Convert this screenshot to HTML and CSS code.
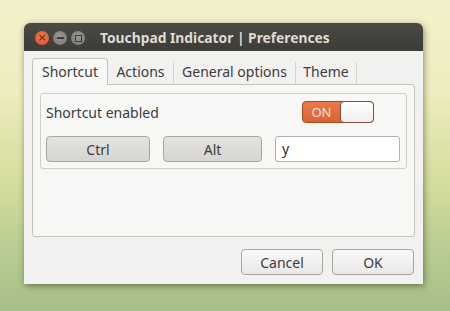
FILE: index.html
```html
<!DOCTYPE html>
<html lang="en">
<head>
  <meta charset="UTF-8" />
  <title>Touchpad Indicator | Preferences</title>
  <link rel="stylesheet" href="styles.css">
</head>
<body>

  <div class="window">
    <div class="titlebar">
      <div class="wm-buttons">
        <span class="wm close">&#215;</span>
        <span class="wm minimize"><i class="dash"></i></span>
        <span class="wm maximize"><i class="box"></i></span>
      </div>
      <div class="title">Touchpad Indicator | Preferences</div>
    </div>

    <div class="content">
      <div class="tabs">
        <div class="tab active">Shortcut</div>
        <div class="tab">Actions</div>
        <div class="tab">General options</div>
        <div class="tab">Theme</div>
      </div>

      <div class="panel">
        <div class="frame">
          <div class="row">
            <span class="label">Shortcut enabled</span>
            <div class="switch">
              <span class="switch-on">ON</span>
              <span class="knob"></span>
            </div>
          </div>
          <div class="row keys">
            <button class="btn key ctrl">Ctrl</button>
            <button class="btn key alt">Alt</button>
            <div class="entry">y</div>
          </div>
        </div>
      </div>

      <div class="actions">
        <button class="btn dialog">Cancel</button>
        <button class="btn dialog">OK</button>
      </div>
    </div>
  </div>

</body>
</html>
```

FILE: styles.css
```css
body {
  margin: 0;
  padding: 0;
  width: 450px;
  height: 311px;
  overflow: hidden;
  font-family: 'Noto Sans', 'DejaVu Sans', sans-serif;
  background: linear-gradient(to bottom, #f3f1cb 0%, #eeedbe 30%, #d3dc9c 60%, #b3c98f 85%, #a6bf86 100%);
}

.window {
  margin: 23px 0 0 24px;
  width: 399px;
  height: 261px;
  background: #f2f1f0;
  border-radius: 6px 6px 0 0;
  box-shadow: 1px 2px 6px rgba(40, 40, 20, 0.5);
  display: flex;
  flex-direction: column;
}

.titlebar {
  height: 28px;
  background: linear-gradient(to bottom, #4a4944, #3c3b37);
  border-radius: 6px 6px 0 0;
  display: flex;
  align-items: center;
}

.wm-buttons {
  display: flex;
  gap: 4px;
  margin-left: 11px;
  margin-top: 2px;
}

.wm {
  width: 14px;
  height: 14px;
  border-radius: 50%;
  display: flex;
  align-items: center;
  justify-content: center;
}

.wm.close {
  background: radial-gradient(circle at 50% 40%, #f07b54, #d9512d);
  color: #5a1a0a;
  font-size: 11px;
  line-height: 14px;
  font-family: 'DejaVu Sans', sans-serif;
}

.wm.minimize,
.wm.maximize {
  background: radial-gradient(circle at 50% 40%, #9c9a94, #75736d);
}

.dash {
  display: block;
  width: 7px;
  height: 2px;
  background: #3c3b37;
}

.box {
  display: block;
  width: 5px;
  height: 5px;
  border: 1px solid #3c3b37;
}

.title {
  margin-left: 15px;
  color: #dfdbd2;
  font-weight: bold;
  font-size: 13.8px;
}

.content {
  flex: 1;
  padding: 7px 8px 0 8px;
  display: flex;
  flex-direction: column;
}

.tabs {
  display: flex;
  height: 26px;
  align-items: flex-end;
}

.tab {
  height: 22px;
  line-height: 20px;
  font-size: 14px;
  color: #3c3c3c;
  text-align: center;
  border-right: 1px solid #d6d4cf;
  box-sizing: border-box;
}

.tab.active {
  width: 76px;
  height: 27px;
  line-height: 26px;
  background: #f7f7f6;
  border: 1px solid #c5c3be;
  border-bottom: none;
  border-radius: 4px 4px 0 0;
  margin-bottom: -1px;
  position: relative;
  z-index: 1;
}

.tab:nth-child(2) { width: 66px; }
.tab:nth-child(3) { width: 122px; }
.tab:nth-child(4) { width: 61px; }

.panel {
  height: 153px;
  box-sizing: border-box;
  background: #f7f7f6;
  border: 1px solid #c5c3be;
  border-radius: 0 3px 3px 3px;
  padding: 8px 7px 0 7px;
}

.frame {
  height: 76px;
  box-sizing: border-box;
  border: 1px solid #cfcdc8;
  border-radius: 3px;
  padding: 7px 6px 0 5px;
  display: flex;
  flex-direction: column;
  gap: 13px;
}

.row {
  display: flex;
  align-items: center;
  justify-content: space-between;
}

.label {
  font-size: 14px;
  color: #3c3c3c;
}

.switch {
  width: 72px;
  height: 22px;
  box-sizing: border-box;
  margin-right: 26px;
  border: 1px solid #a24a22;
  border-radius: 4px;
  background: linear-gradient(to bottom, #ec7848, #dd6232);
  display: flex;
}

.switch-on {
  width: 37px;
  line-height: 20px;
  text-align: center;
  color: #fbe6dc;
  font-size: 13px;
}

.knob {
  flex: 1;
  background: linear-gradient(to bottom, #ffffff, #efeeec);
  border-radius: 4px;
  margin: -1px -1px -1px 0;
  border: 1px solid #7c5340;
}

.keys {
  justify-content: flex-start;
  gap: 13px;
}

.btn {
  font-family: 'Noto Sans', 'DejaVu Sans', sans-serif;
  font-size: 14px;
  color: #3c3c3c;
  border: 1px solid #a8a6a1;
  border-radius: 4px;
  padding: 0;
  height: 26px;
}

.btn.key {
  background: linear-gradient(to bottom, #e4e3e1, #d5d4d1);
}

.btn.ctrl { width: 104px; }
.btn.alt { width: 99px; }

.entry {
  width: 125px;
  height: 26px;
  box-sizing: border-box;
  background: #ffffff;
  border: 1px solid #b3b1ac;
  border-radius: 3px;
  padding-left: 6px;
  line-height: 24px;
  font-size: 14px;
  color: #2e2e2e;
}

.actions {
  display: flex;
  justify-content: flex-end;
  gap: 9px;
  margin-top: 12px;
  padding-right: 1px;
}

.btn.dialog {
  width: 82px;
  background: linear-gradient(to bottom, #f9f9f8, #e9e8e6);
}
```
